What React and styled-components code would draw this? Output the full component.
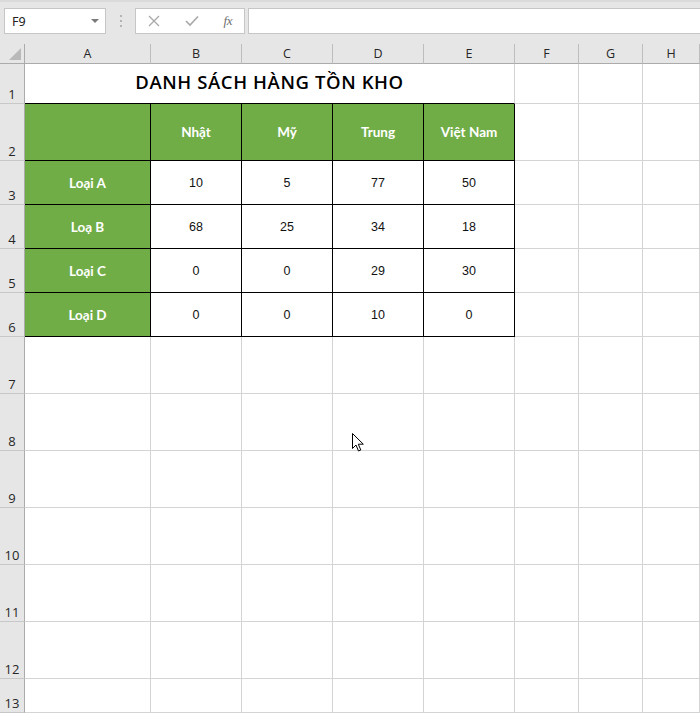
import React from "react";
import styled, { createGlobalStyle } from "styled-components";

const GRID = "#d4d4d4";
const HEAD_LINE = "#ababab";
const GREEN = "#70ad47";

const GlobalStyle = createGlobalStyle`
  html, body {
    margin: 0;
    padding: 0;
    background: #ffffff;
    overflow: hidden;
  }
`;

const columns = ["A", "B", "C", "D", "E", "F", "G", "H"];
const countries = ["Nhật", "Mỹ", "Trung", "Việt Nam"];
const rows = [
  { label: "Loại A", values: [10, 5, 77, 50] },
  { label: "Loạ B", values: [68, 25, 34, 18] },
  { label: "Loại C", values: [0, 0, 29, 30] },
  { label: "Loại D", values: [0, 0, 10, 0] },
];

const Window = styled.div`
  position: relative;
  width: 700px;
  height: 715px;
  overflow: hidden;
  background: #ffffff;
`;

const FormulaBar = styled.div`
  display: flex;
  align-items: flex-start;
  height: 44px;
  box-sizing: border-box;
  padding: 6px 0 0 4px;
  border-top: 2px solid #dadada;
  background: #e6e6e6;
`;

const NameBox = styled.div`
  display: flex;
  align-items: center;
  justify-content: space-between;
  box-sizing: border-box;
  width: 102px;
  height: 26px;
  padding: 0 6px 0 7px;
  background: #ffffff;
  border: 1px solid #c6c6c6;
  font-family: "Noto Sans", "Open Sans", sans-serif;
  font-size: 12.5px;
  color: #222;
`;

const Caret = styled.span`
  width: 0;
  height: 0;
  border-left: 4px solid transparent;
  border-right: 4px solid transparent;
  border-top: 4px solid #7a7a7a;
`;

const Grip = styled.div`
  display: flex;
  flex-direction: column;
  gap: 3px;
  width: 2px;
  margin: 7px 13px 0 14px;
  span {
    width: 2px;
    height: 2px;
    background: #b4b4b4;
  }
`;

const FxBox = styled.div`
  display: flex;
  align-items: center;
  justify-content: space-between;
  box-sizing: border-box;
  width: 110px;
  height: 26px;
  padding: 0 12px 0 12px;
  background: #ffffff;
  border: 1px solid #c6c6c6;
`;

const Fx = styled.span`
  font-family: "Liberation Serif", serif;
  font-style: italic;
  font-size: 13px;
  color: #6e6e6e;
  letter-spacing: -0.5px;
`;

const FormulaInput = styled.div`
  flex: 1;
  height: 26px;
  box-sizing: border-box;
  margin: 0 -2px 0 3px;
  background: #ffffff;
  border: 1px solid #c6c6c6;
`;

const Sheet = styled.div`
  display: grid;
  grid-template-columns: 25px 126px 91px 91px 91px 91px 64px 64px 1fr;
  grid-template-rows: 20px 40px 57px 44px 44px 44px 44px repeat(6, 57px) 34px;
`;

const Corner = styled.div`
  position: relative;
  box-sizing: border-box;
  background: #e6e6e6;
  border-right: 1px solid ${HEAD_LINE};
  border-bottom: 1px solid ${HEAD_LINE};
  &::after {
    content: "";
    position: absolute;
    right: 3px;
    bottom: 3px;
    width: 0;
    height: 0;
    border-left: 12px solid transparent;
    border-bottom: 12px solid #b9b9b9;
  }
`;

const ColHead = styled.div`
  display: flex;
  align-items: center;
  justify-content: center;
  box-sizing: border-box;
  background: #e6e6e6;
  border-right: 1px solid #bdbdbd;
  border-bottom: 1px solid ${HEAD_LINE};
  font-family: "Open Sans", sans-serif;
  font-size: 12.5px;
  color: #262626;
`;

const RowHead = styled.div`
  display: flex;
  align-items: flex-end;
  justify-content: center;
  box-sizing: border-box;
  padding-bottom: 1px;
  background: #e6e6e6;
  border-right: 1px solid ${HEAD_LINE};
  border-bottom: 1px solid #c8c8c8;
  font-family: "Open Sans", sans-serif;
  font-size: 13px;
  line-height: 15px;
  color: #262626;
`;

const Cell = styled.div`
  display: flex;
  align-items: center;
  justify-content: center;
  box-sizing: border-box;
  background: ${(p) => (p.$green ? GREEN : "#ffffff")};
  border-right: 1px solid ${(p) => (p.$boxed ? "#000" : GRID)};
  border-bottom: 1px solid ${(p) => (p.$boxed || p.$underline ? "#000" : GRID)};
  font-family: "Liberation Sans", Arial, sans-serif;
  font-size: 12.5px;
  color: #111;
`;

const Title = styled(Cell)`
  grid-column: span 5;
  padding-bottom: 5px;
  font-family: "Open Sans", sans-serif;
  font-weight: 600;
  font-size: 18.5px;
  letter-spacing: 0.6px;
  color: #000;
`;

const GreenLabel = styled(Cell)`
  font-family: Lato, "Open Sans", sans-serif;
  font-weight: 700;
  font-size: 13.5px;
  color: #ffffff;
`;

const Cursor = styled.svg`
  position: absolute;
  left: 352px;
  top: 433px;
`;

const blanks = (n, keyBase) =>
  Array.from({ length: n }, (_, i) => <Cell key={`${keyBase}-${i}`} />);

export default function App() {
  return (
    <Window>
      <GlobalStyle />
      <FormulaBar>
        <NameBox>
          F9
          <Caret />
        </NameBox>
        <Grip>
          <span />
          <span />
          <span />
        </Grip>
        <FxBox>
          <svg width="12" height="12" viewBox="0 0 12 12">
            <path d="M1 1 L11 11 M11 1 L1 11" stroke="#a8a8a8" strokeWidth="1.3" fill="none" />
          </svg>
          <svg width="14" height="12" viewBox="0 0 14 12">
            <path d="M1 6 L5 10 L13 1.5" stroke="#a8a8a8" strokeWidth="1.6" fill="none" />
          </svg>
          <Fx>fx</Fx>
        </FxBox>
        <FormulaInput />
      </FormulaBar>

      <Sheet>
        <Corner />
        {columns.map((c) => (
          <ColHead key={c}>{c}</ColHead>
        ))}

        <RowHead>1</RowHead>
        <Title $underline>DANH SÁCH HÀNG TỒN KHO</Title>
        {blanks(3, "r1")}

        <RowHead>2</RowHead>
        <GreenLabel $green $boxed />
        {countries.map((c) => (
          <GreenLabel key={c} $green $boxed>
            {c}
          </GreenLabel>
        ))}
        {blanks(3, "r2")}

        {rows.map((r, i) => (
          <React.Fragment key={r.label}>
            <RowHead>{i + 3}</RowHead>
            <GreenLabel $green $boxed>
              {r.label}
            </GreenLabel>
            {r.values.map((v, j) => (
              <Cell key={j} $boxed>
                {v}
              </Cell>
            ))}
            {blanks(3, `r${i + 3}`)}
          </React.Fragment>
        ))}

        {[7, 8, 9, 10, 11, 12, 13].map((n) => (
          <React.Fragment key={n}>
            <RowHead>{n}</RowHead>
            {blanks(8, `r${n}`)}
          </React.Fragment>
        ))}
      </Sheet>

      <Cursor width="13" height="20" viewBox="0 0 13 20">
        <path
          d="M0.5 0.5 L0.5 15.5 L4 12 L6.5 18 L8.8 17 L6.3 11.2 L11.3 11.2 Z"
          fill="#ffffff"
          stroke="#000"
          strokeWidth="1"
          strokeLinejoin="miter"
        />
      </Cursor>
    </Window>
  );
}
